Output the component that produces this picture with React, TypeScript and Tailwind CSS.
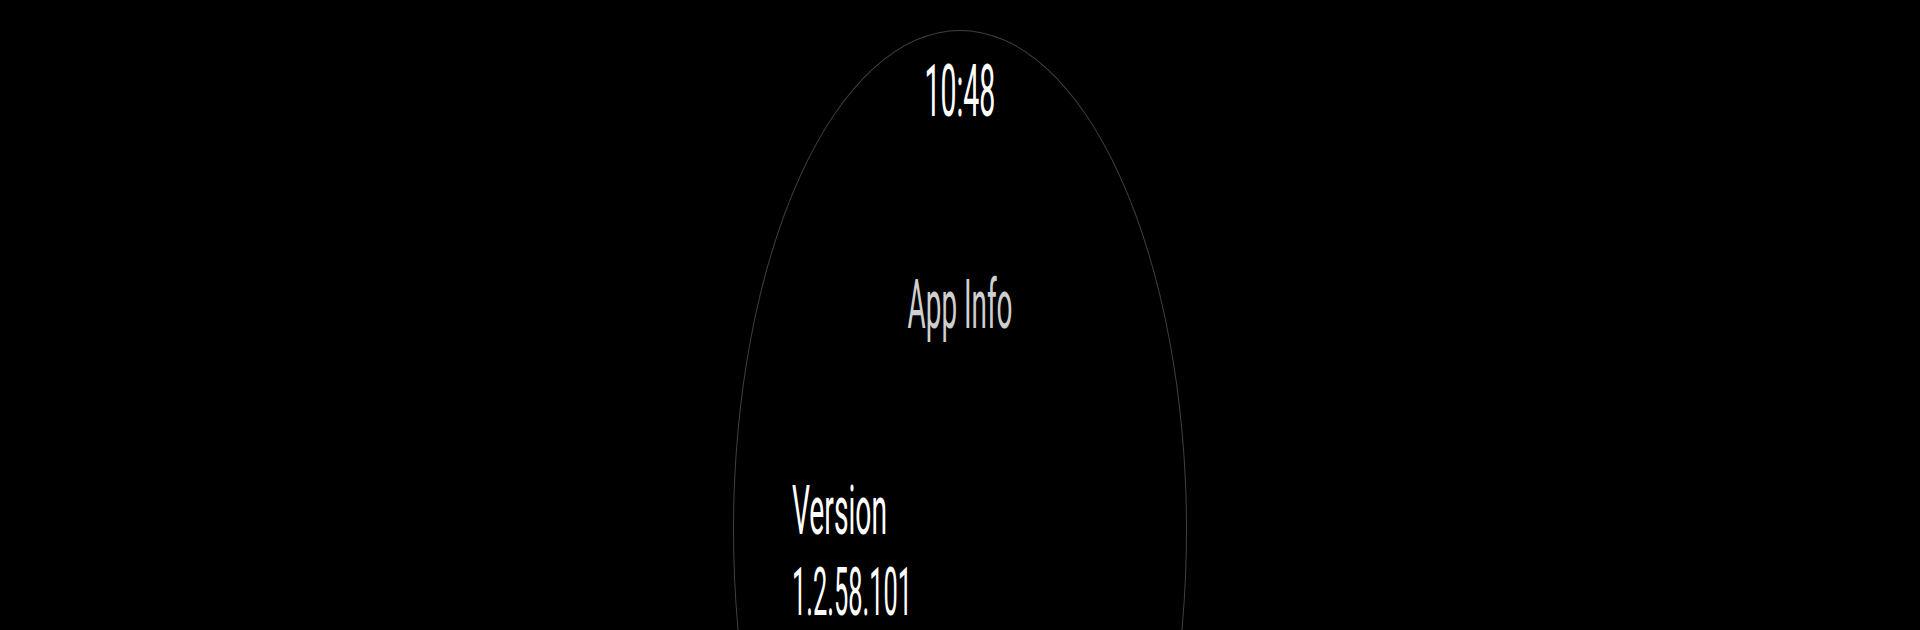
import React from "react";

export default function App() {
  return (
    <div className="w-[1920px] h-[630px] bg-black overflow-hidden flex justify-center" style={{ fontFamily: "Roboto, 'Noto Sans', sans-serif" }}>
      <div className="mt-[30px] w-[454px] h-[1000px] shrink-0 rounded-[50%] border border-[#404040] flex flex-col">
        <div className="mt-[24px] self-center text-[73px] leading-none text-white scale-x-[0.39] origin-center">10:48</div>
        <div className="mt-[143px] self-center text-[68px] leading-none text-[#cfcfcf] scale-x-[0.41] origin-center">App Info</div>
        <div className="mt-[138px] ml-[58px] self-start text-[68px] leading-none text-white scale-x-[0.415] origin-left">Version</div>
        <div className="mt-[15px] ml-[58px] self-start text-[66px] leading-none text-white scale-x-[0.385] origin-left">1.2.58.101</div>
      </div>
    </div>
  );
}
